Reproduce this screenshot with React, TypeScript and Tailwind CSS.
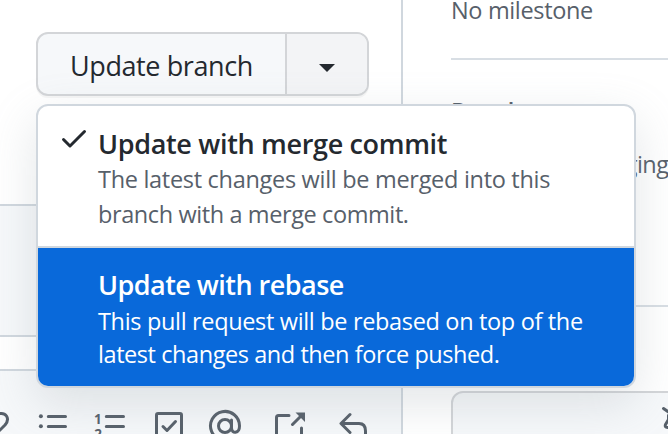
import React from "react";

const muted = "#57606a";

function Line({ className = "", children }: { className?: string; children: React.ReactNode }) {
  return <span className={`block whitespace-nowrap ${className}`}>{children}</span>;
}

function CheckIcon() {
  return (
    <svg width="32" height="32" viewBox="0 0 16 16" fill="currentColor" className="mt-[16px] ml-[20px] shrink-0">
      <path d="M13.78 4.22a.75.75 0 0 1 0 1.06l-7.25 7.25a.75.75 0 0 1-1.06 0L2.22 9.28a.75.75 0 0 1 1.06-1.06L6 10.94l6.72-6.72a.75.75 0 0 1 1.06 0Z" />
    </svg>
  );
}

function Toolbar() {
  const s = { fill: "none", stroke: muted, strokeWidth: 3, strokeLinecap: "round" as const, strokeLinejoin: "round" as const };
  return (
    <svg width="401" height="63" viewBox="0 371 401 63" className="block">
      <path {...s} d="M-4 416C-1 412.500 4 412.500 6.500 416C8.500 419 7.500 422 5 425L-2 432" />
      <g {...s}>
        <path d="M48.300 416.500H65.500M48.300 426.500H65.500" />
        <path d="M106.300 416.500H123.500M106.300 426.500H123.500" />
      </g>
      <circle cx="40.900" cy="416.200" r="2" fill={muted} />
      <circle cx="40.900" cy="426.200" r="2" fill={muted} />
      <g fill={muted} fontFamily="Open Sans, sans-serif" fontWeight="700" fontSize="13.500">
        <text x="94" y="423.700">1</text>
        <text x="94.300" y="438.700">2</text>
      </g>
      <rect {...s} x="156.500" y="413.500" width="25" height="25" rx="1.500" />
      <path {...s} d="M163 426.500L167 430.500L175.500 421.500" />
      <circle {...s} cx="225" cy="426" r="6.500" />
      <path {...s} d="M231.500 420V428C231.500 434 239.500 434 239.500 426A14.500 14.500 0 1 0 233 438" />
      <path {...s} d="M289 415.500H278.500Q276.500 415.500 276.500 417.500V440M301.500 428V440M292.500 424.500L301 416" />
      <path d="M295.500 412.500H305V422Z" fill={muted} />
      <path {...s} d="M350 414.500L341 423.500L350 432.500M341.500 423.500H359Q365.500 423.500 365.500 431V440" />
    </svg>
  );
}

function Menu() {
  return (
    <div className="absolute left-[36px] top-[104px] flex h-[284px] w-[600px] flex-col overflow-hidden rounded-[12px] border-2 border-[#d0d7de] bg-white shadow-[0_16px_48px_rgba(140,149,159,0.24)]">
      <div className="flex h-[142px] shrink-0 border-b-2 border-[#d0d7de] text-[#24292f]">
        <CheckIcon />
        <div className="ml-[8px] pt-[20px]">
          <Line className="h-[36px] text-[27px] leading-[36px] font-[650] tracking-[-0.330px]">Update with merge commit</Line>
          <div className="text-[23.500px] leading-[34px] text-[#57606a]">
            <Line className="tracking-[-0.300px]">The latest changes will be merged into this</Line>
            <Line className="pt-px tracking-[-0.400px]">branch with a merge commit.</Line>
          </div>
        </div>
      </div>
      <div className="grow bg-[#0969da] pt-[19px] pl-[60px] text-white">
        <Line className="h-[36px] text-[27px] leading-[36px] font-[650] tracking-[-0.530px]">Update with rebase</Line>
        <div className="text-[23.500px] leading-[33px]">
          <Line className="pt-[2px] tracking-[-0.335px]">This pull request will be rebased on top of the</Line>
          <Line className="tracking-[-0.430px]">latest changes and then force pushed.</Line>
        </div>
      </div>
    </div>
  );
}

export default function App() {
  return (
    <div className="relative flex h-[434px] w-[668px] overflow-hidden bg-white [font-family:'Open_Sans','Noto_Sans',sans-serif]">
      <main className="flex w-[403px] shrink-0 flex-col border-r-2 border-[#d0d7de]">
        <div className="h-[204px] shrink-0 pt-[32px] pl-[36px]">
          <div className="flex h-[64px] w-[333px] overflow-hidden rounded-[12px] border-2 border-[#d3d5d8] bg-[#f6f8fa] text-[#24292f] shadow-[0_2px_0_rgba(27,31,36,0.04)]">
            <div className="w-[249px] shrink-0 border-r-2 border-[#d3d5d8] pl-[32px]">
              <Line className="text-[27px] leading-[64px] tracking-[-0.400px]">Update branch</Line>
            </div>
            <div className="flex grow items-center justify-center bg-[#f3f4f6]">
              <svg width="16" height="8" viewBox="0 0 16 8" className="mt-[7px]">
                <path d="M0 0H16L8 8Z" fill="#24292f" />
              </svg>
            </div>
          </div>
        </div>
        <div className="h-[133px] shrink-0 border-y-2 border-[#d0d7de] bg-[#f6f8fa]" />
        <div className="h-[32px] shrink-0" />
        <div className="grow border-t-2 border-[#d0d7de] bg-[#f6f8fa]">
          <Toolbar />
        </div>
      </main>
      <aside className="ml-[48px] flex grow flex-col text-[23.500px] leading-[34px] text-[#57606a]">
        <div className="h-[60px] shrink-0 border-b-2 border-[#d8dee4]">
          <Line className="-mt-[7px] tracking-[-0.350px]">No milestone</Line>
        </div>
        <div className="h-[247px] shrink-0 border-b-2 border-[#d8dee4] pt-[34px]">
          <Line className="font-semibold">Development</Line>
          <Line className="mt-[19px] w-[217px] overflow-hidden tracking-[-0.520px]">Successfully merging</Line>
        </div>
        <div className="mt-[84px] flex h-[60px] w-[300px] shrink-0 rounded-[12px] border-2 border-[#d3d5d8] bg-[#f6f8fa]">
          <svg width="32" height="32" viewBox="659 405 32 32" className="mt-[12px] ml-[206px]" fill="none" stroke={muted} strokeWidth="3" strokeLinecap="round" strokeLinejoin="round">
            <path d="M663.500 408.500L688 426M668.500 415.500V419.500L665.500 424.500Q664.500 427.500 667.500 427.500H682" />
          </svg>
        </div>
      </aside>
      <Menu />
    </div>
  );
}
